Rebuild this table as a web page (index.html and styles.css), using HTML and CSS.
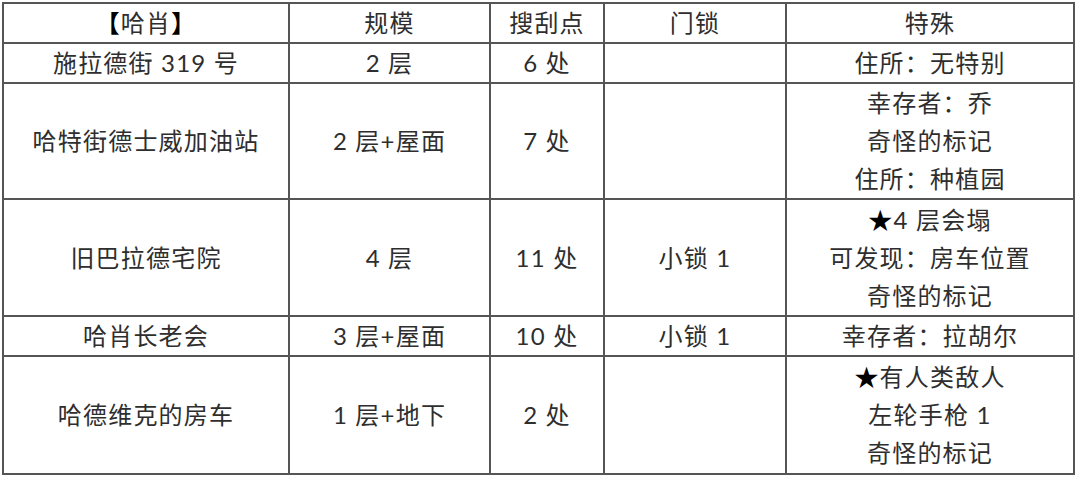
FILE: index.html
```html
<!DOCTYPE html>
<html lang="zh-CN">
<head>
<meta charset="utf-8">
<link rel="stylesheet" href="styles.css">
</head>
<body>
<table class="grid">
  <colgroup>
    <col class="c1"><col class="c2"><col class="c3"><col class="c4"><col class="c5">
  </colgroup>
  <tr class="h40">
    <td><span class="br">【</span>哈肖<span class="br">】</span></td>
    <td>规模</td>
    <td>搜刮点</td>
    <td>门锁</td>
    <td>特殊</td>
  </tr>
  <tr class="h39">
    <td>施拉德街 319 号</td>
    <td>2 层</td>
    <td>6 处</td>
    <td></td>
    <td>住所：无特别</td>
  </tr>
  <tr class="h116">
    <td>哈特街德士威加油站</td>
    <td>2 层+屋面</td>
    <td>7 处</td>
    <td></td>
    <td>幸存者：乔<br>奇怪的标记<br>住所：种植园</td>
  </tr>
  <tr class="h117">
    <td>旧巴拉德宅院</td>
    <td>4 层</td>
    <td>11 处</td>
    <td>小锁 1</td>
    <td><span class="star">★</span>4 层会塌<br>可发现：房车位置<br>奇怪的标记</td>
  </tr>
  <tr class="h39">
    <td>哈肖长老会</td>
    <td>3 层+屋面</td>
    <td>10 处</td>
    <td>小锁 1</td>
    <td>幸存者：拉胡尔</td>
  </tr>
  <tr class="h118">
    <td>哈德维克的房车</td>
    <td>1 层+地下</td>
    <td>2 处</td>
    <td></td>
    <td><span class="star">★</span>有人类敌人<br>左轮手枪 1<br>奇怪的标记</td>
  </tr>
</table>
</body>
</html>
```

FILE: styles.css
```css
html, body {
  margin: 0;
  padding: 0;
  background: #ffffff;
}

body {
  padding: 2px 0 0 2px;
}

.grid {
  border-collapse: collapse;
  table-layout: fixed;
  width: 1071px;
  font-family: "Lato", "Noto Sans CJK SC", sans-serif;
  font-size: 24px;
  color: #2e2e2e;
  letter-spacing: 1.2px;
}

.c1 { width: 286px; }
.c2 { width: 201px; }
.c3 { width: 114px; }
.c4 { width: 182px; }
.c5 { width: 288px; }

.grid td {
  border: 2px solid #555555;
  text-align: center;
  vertical-align: middle;
  padding: 0;
  line-height: 38px;
  white-space: nowrap;
}

.h39 { height: 39px; }
.h40 { height: 40px; }
.h116 { height: 116px; }
.h117 { height: 117px; }
.h118 { height: 118px; }

.br {
  font-weight: bold;
  color: #000000;
}

.star {
  color: #000000;
}
```
